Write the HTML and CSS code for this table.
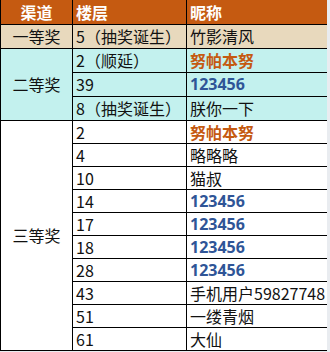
FILE: index.html
```html
<!DOCTYPE html>
<html lang="zh">
<head>
<meta charset="utf-8">
<link rel="stylesheet" href="styles.css">
</head>
<body>
<table class="sheet">
  <colgroup><col class="c1"><col class="c2"><col class="c3"></colgroup>
  <tr class="head"><th class="cat">渠道</th><th>楼层</th><th>昵称</th></tr>
  <tr class="first"><td class="cat">一等奖</td><td>5（抽奖诞生）</td><td>竹影清风</td></tr>
  <tr class="second"><td class="cat" rowspan="3">二等奖</td><td>2（顺延）</td><td class="orange">努帕本努</td></tr>
  <tr class="second"><td>39</td><td class="blue">123456</td></tr>
  <tr class="second"><td>8（抽奖诞生）</td><td>朕你一下</td></tr>
  <tr class="third"><td class="cat" rowspan="10">三等奖</td><td>2</td><td class="orange">努帕本努</td></tr>
  <tr class="third"><td>4</td><td>略略略</td></tr>
  <tr class="third"><td>10</td><td>猫叔</td></tr>
  <tr class="third"><td>14</td><td class="blue">123456</td></tr>
  <tr class="third"><td>17</td><td class="blue">123456</td></tr>
  <tr class="third"><td>18</td><td class="blue">123456</td></tr>
  <tr class="third"><td>28</td><td class="blue">123456</td></tr>
  <tr class="third"><td>43</td><td>手机用户59827748</td></tr>
  <tr class="third"><td>51</td><td>一缕青烟</td></tr>
  <tr class="third"><td>61</td><td>大仙</td></tr>
</table>
</body>
</html>
```
FILE: styles.css
```css
html, body {
  margin: 0;
  padding: 0;
  background: #e9ecf0;
}
.sheet {
  border-collapse: collapse;
  width: 326px;
  table-layout: fixed;
  font-family: "Noto Sans CJK SC", "Liberation Sans", sans-serif;
  font-size: 16px;
  color: #111;
  background: #fff;
}
.c1 { width: 72px; }
.c2 { width: 114px; }
.c3 { width: 140px; }
.sheet th, .sheet td {
  border: 1px solid #000;
  height: 24px;
  padding: 0 0 0 3px;
  text-align: left;
  font-weight: normal;
  white-space: nowrap;
  line-height: 20px;
  box-sizing: border-box;
}
.sheet .third td { height: 23px; }
.sheet tr:first-child th { border-top: none; }
.sheet th, .sheet td:last-child { border-right: none; }
.head th {
  background: #c55a11;
  color: #fff;
  font-weight: 700;
}
.sheet .cat { text-align: center; padding: 0; }
.first td { background: #e8d9bd; }
.second td { background: #c3f1ee; }
.sheet .orange { color: #c55a11; font-weight: 700; }
.sheet .blue {
  color: #2f5597;
  font-weight: 700;
  font-family: "Open Sans", "Liberation Sans", sans-serif;
}
```
